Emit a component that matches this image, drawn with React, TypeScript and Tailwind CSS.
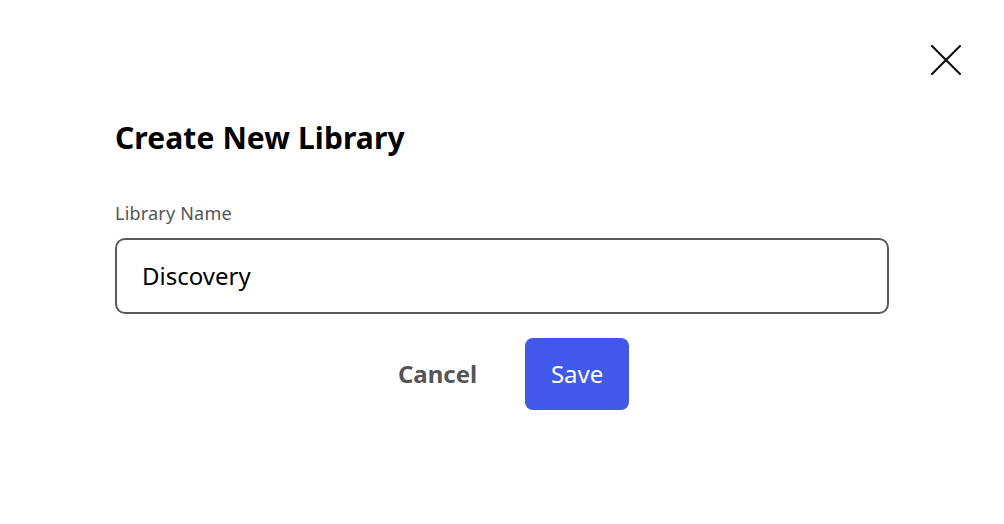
import React from "react";

export default function App() {
  return (
    <div
      className="w-[1004px] h-[524px] bg-white flex flex-col"
      style={{ fontFamily: '"Noto Sans", "Open Sans", sans-serif' }}
    >
      <div className="flex justify-end pt-[45px] pr-[43px]">
        <button className="w-[30px] h-[30px] flex items-center justify-center">
          <svg width="30" height="30" viewBox="0 0 30 30" fill="none">
            <path d="M1 1L29 29M29 1L1 29" stroke="#111" strokeWidth="2.2" strokeLinecap="round" />
          </svg>
        </button>
      </div>
      <div className="flex flex-col pl-[115px] pr-[115px]">
        <h1 className="mt-[45px] text-[30px] leading-[36px] font-bold text-black tracking-[0.1px]">
          Create New Library
        </h1>
        <label className="mt-[46px] text-[18px] leading-[22px] text-[#555] tracking-[0.2px]">Library Name</label>
        <div className="mt-[14px] h-[76px] border-2 border-[#5a5a5a] rounded-[10px] flex items-center pl-[25px]">
          <span className="text-[24px] text-black">Discovery</span>
        </div>
        <div className="mt-[24px] flex justify-center items-center gap-[48px] pl-[23px]">
          <span className="text-[24px] font-bold text-[#555]">Cancel</span>
          <button className="w-[104px] h-[72px] rounded-[8px] bg-[#4158e9] text-white text-[24px]">
            Save
          </button>
        </div>
      </div>
    </div>
  );
}
